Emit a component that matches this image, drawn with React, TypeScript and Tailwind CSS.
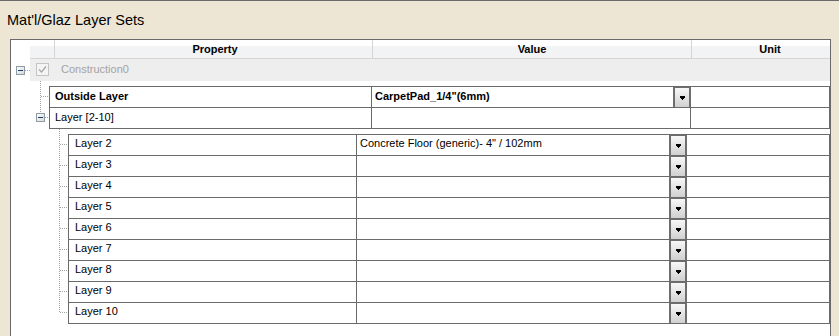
import React from 'react';

const layers = [
  { name: 'Layer 2', value: 'Concrete Floor (generic)- 4" / 102mm' },
  { name: 'Layer 3', value: '' },
  { name: 'Layer 4', value: '' },
  { name: 'Layer 5', value: '' },
  { name: 'Layer 6', value: '' },
  { name: 'Layer 7', value: '' },
  { name: 'Layer 8', value: '' },
  { name: 'Layer 9', value: '' },
  { name: 'Layer 10', value: '' },
];

const DOT = '#a3a3a3';

// little [-] expander used by the tree
function Minus({ x, y }: { x: number; y: number }) {
  return (
    <g shapeRendering="crispEdges">
      <rect x={x + 0.5} y={y + 0.5} width={8} height={8} fill="url(#exp)" stroke="#8e9ca8" />
      <line x1={x + 2} y1={y + 4.5} x2={x + 7} y2={y + 4.5} stroke="#1d3a70" />
    </g>
  );
}

function Defs() {
  return (
    <defs>
      <linearGradient id="exp" x1="0" y1="0" x2="1" y2="1">
        <stop offset="0" stopColor="#ffffff" />
        <stop offset="1" stopColor="#d6d6d0" />
      </linearGradient>
    </defs>
  );
}

function DropButton() {
  return (
    <div className="w-[18px] h-full shrink-0 border-x-2 border-t border-[#6e6e6e] bg-linear-to-b from-[#f8f8f8] to-[#d0d0d0] flex items-center justify-center">
      <svg width="7" height="4" viewBox="0 0 7 4" shapeRendering="crispEdges">
        <rect x="1" y="0" width="5" height="1" fill="#000" />
        <rect x="1" y="1" width="5" height="1" fill="#000" />
        <rect x="2" y="2" width="3" height="1" fill="#000" />
        <rect x="3" y="3" width="1" height="1" fill="#000" />
      </svg>
    </div>
  );
}

export default function App() {
  return (
    <div className="w-[839px] h-[336px] overflow-hidden bg-[#ede6d4] border-t border-[#6a6a6a] flex flex-col font-['Liberation_Sans',Arial,sans-serif] text-black">
      <div className="pt-[11px] pl-[7px] text-[14.5px] leading-[17px]">Mat'l/Glaz Layer Sets</div>

      <div className="ml-[10px] mt-[10px] w-[821px] h-[320px] shrink-0 border border-[#6a6a6a] bg-white overflow-hidden text-[11px]">
        {/* header */}
        <div className="flex h-[19px] pl-[19px] overflow-hidden">
          <div className="flex flex-1 border-b border-[#d5d5d5] bg-linear-to-b from-white from-35% to-[#f2f3f5] to-36% font-bold leading-[18px]">
            <div className="w-[25px] shrink-0 border-r border-[#d5d5d5]" />
            <div className="w-[318px] shrink-0 border-r border-[#d5d5d5] text-center pl-[3px]">Property</div>
            <div className="w-[319px] shrink-0 border-r border-[#d5d5d5] text-center">Value</div>
            <div className="w-[156px] shrink-0 text-center">Unit</div>
          </div>
        </div>

        {/* Construction0 */}
        <div className="flex h-[22px]">
          <svg width="19" height="22" className="shrink-0">
            <Defs />
            <Minus x={5} y={7} />
            <line x1={14} y1={11.5} x2={19} y2={11.5} stroke={DOT} strokeDasharray="1 1" shapeRendering="crispEdges" />
          </svg>
          <div className="flex flex-1 items-start bg-[#eeeeee]">
            <svg width="13" height="13" className="ml-[6px] mt-[4px] shrink-0" shapeRendering="crispEdges">
              <rect x="0.5" y="0.5" width="12" height="12" fill="#f4f4f4" stroke="#c4c4c4" />
              <path d="M3 6.5 L5.5 9 L10 3.5" fill="none" stroke="#a8a8a8" strokeWidth="1.3" shapeRendering="auto" />
            </svg>
            <span className="ml-[12px] leading-[20px] text-[#a3a3a3]">Construction0</span>
          </div>
        </div>

        {/* Outside Layer / Layer [2-10] */}
        <div className="flex">
          <svg width="38" height="48" className="shrink-0">
            <Defs />
            <g stroke={DOT} strokeDasharray="1 1" shapeRendering="crispEdges">
              <line x1={29.5} y1={0} x2={29.5} y2={32} />
              <line x1={30} y1={15.5} x2={38} y2={15.5} />
              <line x1={34} y1={36.5} x2={38} y2={36.5} />
            </g>
            <Minus x={25} y={32} />
          </svg>
          <div className="flex-1 mt-[5px] border-l border-t border-[#6a6a6a]">
            <div className="flex h-[21px] border-b border-[#6a6a6a]">
              <div className="w-[322px] shrink-0 border-r border-[#6a6a6a] pl-[5px] font-bold leading-[18px]">Outside Layer</div>
              <div className="w-[319px] shrink-0 flex">
                <div className="flex-1 pl-[3px] font-bold leading-[18px]">CarpetPad_1/4"(6mm)</div>
                <DropButton />
              </div>
              <div className="flex-1 border-r border-[#6a6a6a]" />
            </div>
            <div className="flex h-[21px] border-b border-[#6a6a6a]">
              <div className="w-[322px] shrink-0 border-r border-[#6a6a6a] pl-[5px] leading-[18px]">Layer [2-10]</div>
              <div className="w-[319px] shrink-0 border-r border-[#6a6a6a]" />
              <div className="flex-1 border-r border-[#6a6a6a]" />
            </div>
          </div>
        </div>

        {/* Layer 2..10 */}
        <div className="flex">
          <svg width="57" height="195" className="shrink-0">
            <g stroke={DOT} strokeDasharray="1 1" shapeRendering="crispEdges">
              <line x1={48.5} y1={0} x2={48.5} y2={184} />
              {layers.map((l, i) => (
                <line key={l.name} x1={49} y1={15.5 + 21 * i} x2={57} y2={15.5 + 21 * i} />
              ))}
            </g>
          </svg>
          <div className="flex-1 self-start mt-[5px] border-l border-t border-[#6a6a6a]">
            {layers.map((l) => (
              <div key={l.name} className="flex h-[21px] border-b border-[#6a6a6a]">
                <div className="w-[288px] shrink-0 border-r border-[#6a6a6a] pl-[6px] leading-[17px]">{l.name}</div>
                <div className="w-[330px] shrink-0 flex">
                  <div className="flex-1 pl-[3px] leading-[17px] whitespace-nowrap">{l.value}</div>
                  <DropButton />
                </div>
                <div className="flex-1 border-r border-[#6a6a6a]" />
              </div>
            ))}
          </div>
        </div>
      </div>
    </div>
  );
}
